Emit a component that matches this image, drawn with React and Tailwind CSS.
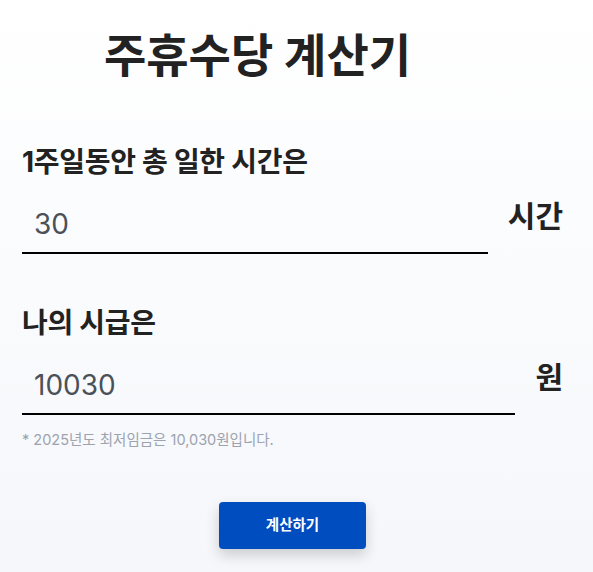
import React, { useState } from "react";

const FONT = { fontFamily: 'Inter, "Noto Sans CJK KR", sans-serif' };

function Field({ label, value, onChange, unit }) {
  return (
    <div>
      <div className="text-[28px] font-bold text-[#222222] tracking-[-0.01em] leading-[36px]">
        {label}
      </div>
      <div className="flex items-start gap-[20px] mt-[16px]">
        <div className="flex-1 border-b-2 border-black">
          <input
            className="w-full bg-transparent outline-none px-[12px] h-[56px] text-[28px] text-[#4b5158]"
            style={FONT}
            value={value}
            onChange={(e) => onChange(e.target.value)}
          />
        </div>
        <div className="text-[30px] font-bold text-[#222222] leading-[36px] mt-[2px]">
          {unit}
        </div>
      </div>
    </div>
  );
}

export default function App() {
  const [hours, setHours] = useState("30");
  const [wage, setWage] = useState("10030");

  return (
    <div
      className="min-h-[572px] bg-gradient-to-b from-white to-[#f5f7fb] pl-[22px] pr-[30px] pt-[24px]"
      style={FONT}
    >
      <h1 className="text-center text-[46px] font-bold text-[#222222] leading-[62px] pr-[70px]">
        주휴수당 계산기
      </h1>

      <div className="mt-[58px]">
        <Field label="1주일동안 총 일한 시간은" value={hours} onChange={setHours} unit="시간" />
      </div>

      <div className="mt-[51px]">
        <Field label="나의 시급은" value={wage} onChange={setWage} unit="원" />
      </div>

      <p className="mt-[14px] text-[14.5px] text-[#9ca3af]">* 2025년도 최저임금은 10,030원입니다.</p>

      <div className="flex justify-center mt-[51px]">
        <button className="w-[147px] h-[47px] rounded-[4px] bg-[#004dbf] text-white text-[14.5px] font-bold shadow-[0_6px_14px_rgba(0,0,0,0.18)]">
          계산하기
        </button>
      </div>
    </div>
  );
}
